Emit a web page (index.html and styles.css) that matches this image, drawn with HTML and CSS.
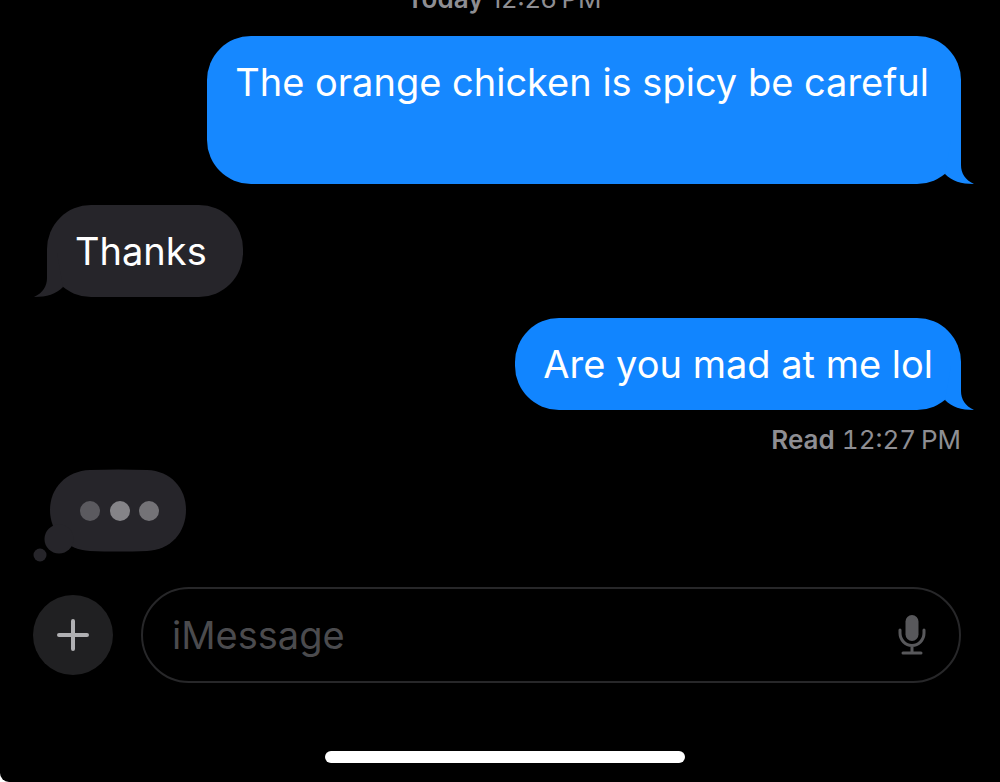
FILE: index.html
```html
<!DOCTYPE html>
<html lang="en">
<head>
<meta charset="utf-8">
<meta name="viewport" content="width=device-width, initial-scale=1">
<title>Messages</title>
<link rel="stylesheet" href="styles.css">
</head>
<body>
<div class="screen">
  <main class="thread">
    <p class="stamp"><b>Today</b> <time>12:26&#8201;PM</time></p>
    <div class="bubble sent tall">The orange chicken is spicy be careful
      <svg class="tail" viewBox="0 0 31 44" aria-hidden="true"><path d="M2 34C9 41 18 44 31 44C22 40 18 33 18 25V0H8Z"/></svg>
    </div>
    <div class="bubble received">Thanks
      <svg class="tail" viewBox="0 0 31 44" aria-hidden="true"><path d="M2 34C9 41 18 44 31 44C22 40 18 33 18 25V0H8Z"/></svg>
    </div>
    <div class="bubble sent last">Are you mad at me lol
      <svg class="tail" viewBox="0 0 31 44" aria-hidden="true"><path d="M2 34C9 41 18 44 31 44C22 40 18 33 18 25V0H8Z"/></svg>
    </div>
    <p class="receipt"><b>Read</b> <time>12:27&#8201;PM</time></p>
    <svg class="typing" viewBox="0 0 154 94" role="img" aria-label="Typing">
      <path class="cloud" d="M57 1Q85 0 114 1C138 2 153 19 153 41S138 81 114 82Q85 83 57 82C33 81 17 63 17 41S33 2 57 1Z"/>
      <circle class="cloud" cx="26" cy="70" r="14.500"/>
      <circle class="cloud" cx="7" cy="86" r="6.500"/>
      <circle class="dot-low" cx="57" cy="42" r="10"/>
      <circle class="dot-high" cx="87" cy="42" r="10"/>
      <circle class="dot-mid" cx="116" cy="42" r="10"/>
    </svg>
  </main>
  <form class="composer">
    <button class="add" type="button" aria-label="Add attachment">
      <svg class="plus" viewBox="0 0 32 32" aria-hidden="true"><path d="M16 2V30M2 16H30"/></svg>
    </button>
    <div class="field">
      <input class="message" type="text" placeholder="iMessage" aria-label="iMessage">
      <button class="dictate" type="button" aria-label="Dictate">
        <svg class="mic" viewBox="0 0 28 42" aria-hidden="true">
          <rect x="7.500" y="1" width="13" height="26" rx="6.500"/>
          <path d="M2 16V19A12 12.500 0 0 0 26 19V16M14 32V38M5 39H23"/>
        </svg>
      </button>
    </div>
  </form>
  <div class="home"></div>
</div>
</body>
</html>
```
FILE: styles.css
```css
* {
  box-sizing: border-box;
}

body {
  margin: 0;
  background: #fff;
  font-family: Inter, "Liberation Sans", sans-serif;
}

.screen {
  display: flex;
  flex-direction: column;
  min-height: 100vh;
  overflow: hidden;
  background: #000;
  border-bottom-left-radius: 9px;
}

.thread {
  display: flex;
  flex-direction: column;
  padding: 0 39px 0 47px;
}

.stamp,
.receipt {
  margin: 0;
  color: #8e8e93;
  font-size: 26px;
  line-height: 32px;
}

.stamp b,
.receipt b {
  font-weight: 600;
}

.stamp {
  align-self: center;
  margin-top: -17px;
}

.bubble {
  position: relative;
  padding: 22px 28px;
  border-radius: 44px;
  color: #fff;
  font-size: 38px;
  line-height: 48px;
}

.sent {
  align-self: flex-end;
  background: #1688ff;
  fill: #1688ff;
}

.received {
  align-self: flex-start;
  margin: 21px 0;
  padding-right: 36px;
  background: #26252a;
  fill: #26252a;
}

.tall {
  margin-top: 21px;
  padding-right: 32px;
  padding-bottom: 78px;
}

.last {
  background: #1185ff;
  fill: #1185ff;
}

.tail {
  position: absolute;
  right: -13px;
  bottom: 0;
  width: 31px;
  height: 44px;
}

.received .tail {
  right: auto;
  left: -13px;
  transform: scaleX(-1);
}

.receipt {
  align-self: flex-end;
  margin-top: 14px;
  font-variant-numeric: tabular-nums;
}

.typing {
  width: 154px;
  height: 94px;
  margin: 13px 0 0 -14px;
}

.cloud {
  fill: #26252a;
}

.dot-low {
  fill: #5b5a5f;
}

.dot-mid {
  fill: #747377;
}

.dot-high {
  fill: #858488;
}

.composer {
  display: flex;
  align-items: center;
  gap: 28px;
  margin-top: 24px;
  padding: 0 39px 0 33px;
}

.add {
  display: grid;
  place-items: center;
  flex: none;
  width: 80px;
  height: 80px;
  padding: 0;
  border: 0;
  border-radius: 50%;
  background: #202022;
}

.plus {
  width: 32px;
  height: 32px;
  fill: none;
  stroke: #b0b0b3;
  stroke-width: 4;
  stroke-linecap: round;
}

.field {
  display: flex;
  align-items: center;
  flex: 1;
  min-width: 0;
  height: 96px;
  padding: 0 33px 0 29px;
  border: 2px solid #272729;
  border-radius: 48px;
}

.message {
  flex: 1;
  min-width: 0;
  padding: 0;
  border: 0;
  outline: 0;
  background: transparent;
  color: #fff;
  font: inherit;
  font-size: 38px;
  line-height: 48px;
}

.message::placeholder {
  color: #4b4b4e;
  opacity: 1;
}

.dictate {
  display: flex;
  padding: 0;
  border: 0;
  background: transparent;
}

.mic {
  width: 28px;
  height: 42px;
  fill: #58585b;
}

.mic path {
  fill: none;
  stroke: #58585b;
  stroke-width: 3;
  stroke-linecap: round;
}

.home {
  align-self: center;
  width: 36%;
  height: 12px;
  margin: auto 0 19px;
  margin-left: 9px;
  border-radius: 6px;
  background: #fff;
}
```
